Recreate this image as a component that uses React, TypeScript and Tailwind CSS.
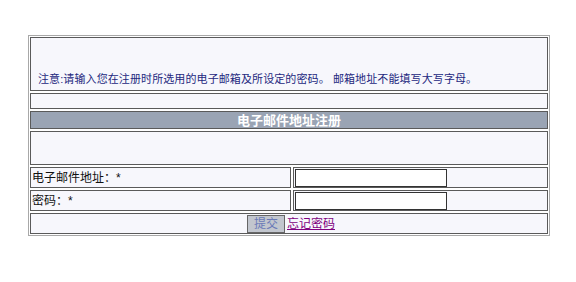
export default function App() {
  const font = { fontFamily: '"Liberation Sans", "Noto Sans CJK SC", sans-serif' };
  return (
    <div className="min-h-[282px] w-[576px] bg-white pt-[35px] pl-[28px]" style={font}>
      <div className="flex w-[522px] flex-col gap-[2px] border border-[#a8a8a8] p-[1px]">
        {/* note */}
        <div className="flex h-[54px] items-end border border-[#5a5a5a] bg-[#f7f7fc] pb-[4px] pl-[7px] text-[11px] leading-[14px] tracking-[0.1px] text-[#24287e]">
          注意:请输入您在注册时所选用的电子邮箱及所设定的密码。 邮箱地址不能填写大写字母。
        </div>
        <div className="h-[16px] border border-[#5a5a5a] bg-[#f7f7fc]" />
        {/* header */}
        <div className="flex h-[18px] items-center justify-center border border-[#5a5a5a] bg-[#9aa4b4] text-[13px] font-bold leading-none text-white">
          电子邮件地址注册
        </div>
        <div className="h-[34px] border border-[#5a5a5a] bg-[#f7f7fc]" />
        {/* email */}
        <div className="flex h-[21px] gap-[2px]">
          <div className="flex w-[261px] items-center border border-[#5a5a5a] bg-[#f7f7fc] pl-[1px] text-[12px] text-[#111]">
            电子邮件地址：*
          </div>
          <div className="flex flex-1 items-center border border-[#5a5a5a] bg-[#f7f7fc] pl-[1px]">
            <input className="h-[18px] w-[152px] border border-[#333] bg-white outline-none" />
          </div>
        </div>
        {/* password */}
        <div className="flex h-[21px] gap-[2px]">
          <div className="flex w-[261px] items-center border border-[#5a5a5a] bg-[#f7f7fc] pl-[1px] text-[12px] text-[#111]">
            密码：*
          </div>
          <div className="flex flex-1 items-center border border-[#5a5a5a] bg-[#f7f7fc] pl-[1px]">
            <input type="password" className="h-[18px] w-[152px] border border-[#333] bg-white outline-none" />
          </div>
        </div>
        {/* submit */}
        <div className="flex h-[21px] items-center justify-center gap-[2px] border border-[#5a5a5a] bg-[#f7f7fc] pl-[4px]">
          <button className="h-[18px] w-[38px] border border-[#666] bg-[#c2c6ce] text-[12px] leading-none text-[#6a7ab8]">
            提交
          </button>
          <a href="#" className="text-[12px] leading-none text-[#800080] underline">
            忘记密码
          </a>
        </div>
      </div>
    </div>
  );
}
